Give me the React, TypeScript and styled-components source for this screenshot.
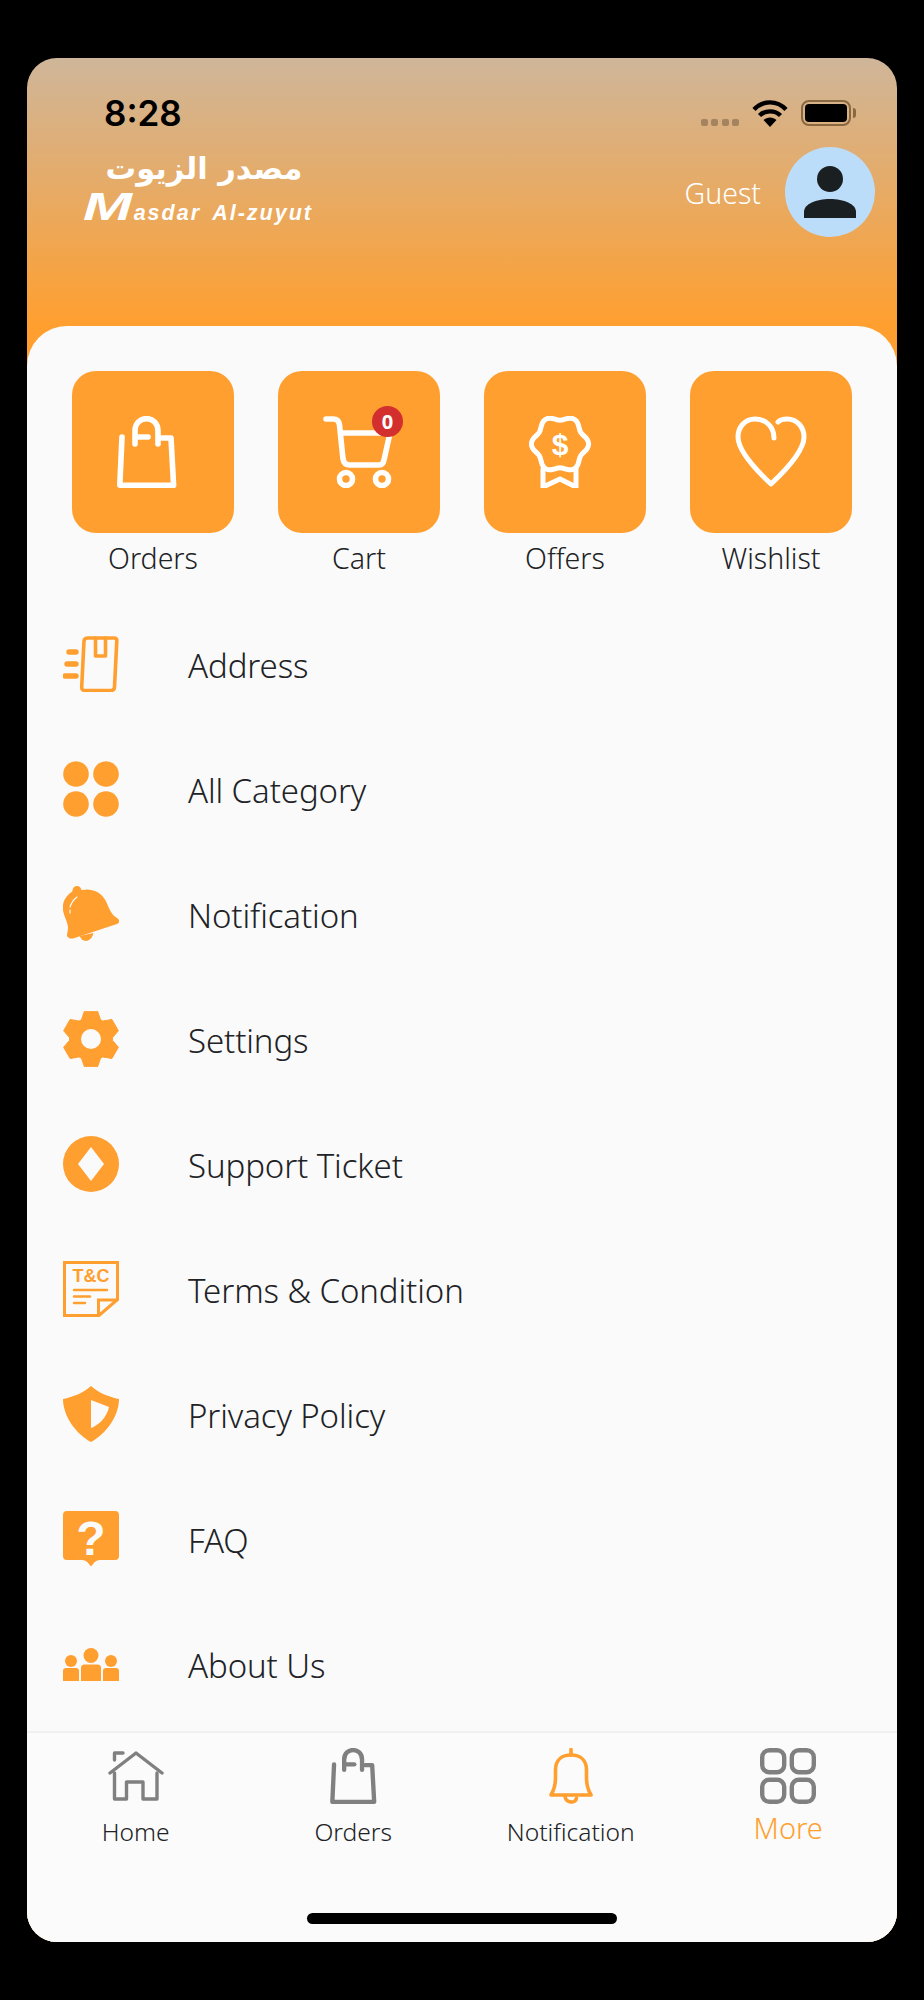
import { ReactNode } from "react";
import styled, { createGlobalStyle } from "styled-components";

const ORANGE = "#ff9f2f";
const GRAY = "#808080";
const TEXT = "#202225";
const UI_FONT = `"Noto Sans", "Open Sans", sans-serif`;

const Global = createGlobalStyle`
  html, body {
    margin: 0;
    padding: 0;
    background: #000;
  }
`;

// wavy outline of the offers badge
const rosette = (cx: number, cy: number, radius: number, wave: number, lobes: number) => {
  const points: string[] = [];
  for (let i = 0; i < 96; i++) {
    const a = (i / 96) * Math.PI * 2;
    const r = radius + wave * Math.cos(lobes * a);
    points.push(`${(cx + r * Math.cos(a)).toFixed(2)} ${(cy + r * Math.sin(a)).toFixed(2)}`);
  }
  return `M${points.join(" L")} Z`;
};

// six tooth cog for the settings row
const cog = (cx: number, cy: number) => {
  const points: string[] = [];
  for (let i = 0; i < 6; i++) {
    const mid = (i * Math.PI) / 3 - Math.PI / 2;
    [
      [21.5, -0.46],
      [28.6, -0.23],
      [28.6, 0.23],
      [21.5, 0.46],
    ].forEach(([r, off]) => {
      points.push(`${(cx + r * Math.cos(mid + off)).toFixed(2)} ${(cy + r * Math.sin(mid + off)).toFixed(2)}`);
    });
  }
  return `M${points.join(" L")} Z`;
};

const Line = styled.g<{ $color?: string; $width?: number }>`
  fill: none;
  stroke: ${({ $color }) => $color ?? "#fff"};
  stroke-width: ${({ $width }) => $width ?? 5};
  stroke-linecap: round;
  stroke-linejoin: round;
`;

const Glyph = styled.text<{ $color: string; $size: number }>`
  font-family: "Liberation Sans", sans-serif;
  font-weight: 700;
  font-size: ${({ $size }) => $size}px;
  fill: ${({ $color }) => $color};
  text-anchor: middle;
`;

const BagPaths = ({ color }: { color: string }) => (
  <Line $color={color} $width={5.6}>
    <path d="M5 21 L2.8 69.2 H56.6 L54 22 H45" />
    <path d="M18 28 V15 C18 -1.5 41 -1.5 41 15 V28" />
    <path d="M20 21 H31" />
  </Line>
);

const CartIcon = () => (
  <svg width="72" height="72" viewBox="0 0 72 72">
    <Line $width={5.6}>
      <path d="M3 3 H10 Q16 3 16.5 9 L20 43 Q21 49 27 49 H56 Q60 49 61 44 L67 17 H18" />
      <circle cx="23" cy="63" r="6.5" />
      <circle cx="59" cy="63" r="6.5" />
    </Line>
  </svg>
);

const OffersIcon = () => (
  <svg width="72" height="72" viewBox="0 0 72 72">
    <Line>
      <path d={rosette(31, 28, 26.2, 2.4, 6)} />
      <path d="M14 52 V71 L31 63 L47 71 V52" strokeLinejoin="miter" strokeLinecap="butt" />
    </Line>
    <Glyph x="31" y="39" $color="#fff" $size={30}>
      $
    </Glyph>
  </svg>
);

const HeartIcon = () => (
  <svg width="72" height="72" viewBox="0 0 72 72">
    <Line>
      <path d="M39 22 C39 10 30 3 20 3 C10 3 3 11 3 21 C3 35 20 53 36 68 C52 53 69 35 69 21 C69 11 62 3 52 3 C48 3 45 4 43 6" />
    </Line>
  </svg>
);

const AddressIcon = () => (
  <svg width="56" height="56" viewBox="0 0 56 56">
    <Line $color={ORANGE} $width={3.6}>
      <path d="M25 2 H51 Q54 2 53.8 5 L51.5 51 Q51.3 54.5 48 54.5 H22 Q18.5 54.5 18.7 51 L21 5 Q21.3 2 25 2 Z" />
      <path d="M32.5 2 V20 H42.5 V2" />
    </Line>
    <Line $color={ORANGE} $width={5.4}>
      <path d="M6 16 H13" />
      <path d="M4 28 H13" />
      <path d="M2 40 H13" />
    </Line>
  </svg>
);

const CategoryIcon = () => (
  <svg width="56" height="56" viewBox="0 0 56 56" fill={ORANGE}>
    <circle cx="13" cy="13" r="12.8" />
    <circle cx="43" cy="13" r="12.8" />
    <circle cx="13" cy="43" r="12.8" />
    <circle cx="43" cy="43" r="12.8" />
  </svg>
);

const BellIcon = () => (
  <svg width="56" height="56" viewBox="0 0 56 56">
    <g fill={ORANGE}>
      <circle cx="14" cy="4.7" r="4.6" />
      <path d="M10 5 C2 10 -1 17 0 24 C1 31 5 36 5 42 C5 45 4 47 4 49 C4 52 8 53 10 52.5 L54 38 C57 37 57 33.5 54 32 C49 29 47 24 45 20 C42 11 36 4 24 3.5 Z" />
      <path d="M16.7 50 C19 57 28 57 30.5 47 Z" />
    </g>
    <Line $width={1.1}>
      <path d="M14 11 C10 14 8 18 7 21" />
      <path d="M7 24 V27" />
    </Line>
  </svg>
);

const GearIcon = () => (
  <svg width="56" height="56" viewBox="0 0 56 56">
    <path d={cog(28, 28)} fill={ORANGE} stroke={ORANGE} strokeWidth="1" strokeLinejoin="round" />
    <circle cx="28" cy="28" r="10" fill="#fafafa" />
  </svg>
);

const SupportIcon = () => (
  <svg width="56" height="56" viewBox="0 0 56 56">
    <circle cx="28" cy="28" r="28" fill={ORANGE} />
    <path d="M28 11 L41 28 L28 45 L15 28 Z" fill="#fafafa" />
  </svg>
);

const TermsIcon = () => (
  <svg width="56" height="56" viewBox="0 0 56 56">
    <Line $color={ORANGE} $width={3}>
      <path d="M1.5 1.5 H54.5 V38.5 L36 54.5 H1.5 Z" strokeLinejoin="miter" />
      <path d="M54 39 H35.5 V54" strokeLinejoin="miter" />
      <path d="M11 29 H44" strokeWidth="2.4" />
      <path d="M11 35.5 H27" strokeWidth="2.4" />
      <path d="M11 42 H22" strokeWidth="2.4" />
    </Line>
    <Glyph x="28" y="21" $color={ORANGE} $size={18}>
      T&amp;C
    </Glyph>
  </svg>
);

const ShieldIcon = () => (
  <svg width="56" height="56" viewBox="0 0 56 56">
    <path d="M28 0 C20 7 10 11 0 13 C0 30 13 48 28 56 C43 48 56 30 56 13 C46 11 36 7 28 0 Z" fill={ORANGE} />
    <path d="M28 14 L46 21 C44 31 36 39 28 42 Z" fill="#fafafa" />
  </svg>
);

const FaqIcon = () => (
  <svg width="56" height="56" viewBox="0 0 56 56">
    <path
      d="M4 0 H52 Q56 0 56 4 V45 Q56 49 52 49 H37 Q33 49 30 53 Q28 57 26 53 Q23 49 19 49 H4 Q0 49 0 45 V4 Q0 0 4 0 Z"
      fill={ORANGE}
    />
    <Glyph x="28" y="43.6" $color="#fafafa" $size={48}>
      ?
    </Glyph>
  </svg>
);

const AboutIcon = () => (
  <svg width="56" height="33" viewBox="0 0 56 33" fill={ORANGE}>
    <circle cx="28" cy="7.5" r="7.5" />
    <circle cx="8" cy="13" r="6" />
    <circle cx="48" cy="13" r="6" />
    <path d="M18 20 Q18 16.5 21.5 16.5 H34.5 Q38 16.5 38 20 V33 H18 Z" />
    <path d="M0 23 Q0 20 3 20 H13 Q16 20 16 23 V33 H0 Z" />
    <path d="M40 23 Q40 20 43 20 H53 Q56 20 56 23 V33 H40 Z" />
  </svg>
);

const HomeIcon = () => (
  <svg width="56" height="50" viewBox="0 0 56 50">
    <Line $color={GRAY} $width={3.4}>
      <path d="M2 22 L28 2 L54 22" />
      <path d="M6.5 9 V2 H15" />
      <path d="M6.5 22 V48 H18.5 V31 H35 V48 H49 V22" />
    </Line>
  </svg>
);

const TabBellIcon = () => (
  <svg width="44" height="56" viewBox="0 0 44 56">
    <Line $color={ORANGE} $width={3.6}>
      <path d="M22 1.5 V7" />
      <path d="M2 47 C5 42 6.5 38 6.5 30 V22 C6.5 12 13 7 22 7 C31 7 37.5 12 37.5 22 V30 C37.5 38 39 42 42 47 Z" />
      <path d="M16 48 C16 55 27 56 27.5 50" />
    </Line>
  </svg>
);

const TabGridIcon = () => (
  <svg width="56" height="56" viewBox="0 0 56 56">
    <Line $color={GRAY} $width={4.4}>
      <rect x="2.2" y="2.2" width="22" height="22" rx="7" />
      <rect x="31.8" y="2.2" width="22" height="22" rx="7" />
      <rect x="2.2" y="31.8" width="22" height="22" rx="7" />
      <rect x="31.8" y="31.8" width="22" height="22" rx="7" />
    </Line>
  </svg>
);

const Page = styled.div`
  width: 924px;
  height: 2000px;
  box-sizing: border-box;
  padding: 58px 27px 58px;
  background: #000;
  font-family: ${UI_FONT};
`;

const Phone = styled.div`
  height: 100%;
  display: flex;
  flex-direction: column;
  border-radius: 30px;
  overflow: hidden;
  background: linear-gradient(#cfb69a 0, ${ORANGE} 268px);
`;

const Header = styled.header`
  height: 268px;
  flex: none;
  box-sizing: border-box;
  padding: 35px 22px 0 56px;
`;

const StatusBar = styled.div`
  height: 40px;
  display: flex;
  align-items: center;
  justify-content: space-between;
  padding: 0 24px 0 21px;
`;

const Clock = styled.span`
  font-family: "Inter", "Liberation Sans", sans-serif;
  font-weight: 600;
  font-size: 35px;
  color: #000;
`;

const StatusIcons = styled.div`
  display: flex;
  align-items: center;
  gap: 13px;
`;

const SignalDots = styled.div`
  display: flex;
  gap: 3.5px;
  margin-top: 18px;
`;

const SignalDot = styled.i`
  width: 7px;
  height: 7px;
  border-radius: 2px;
  background: rgba(0, 0, 0, 0.25);
`;

const Battery = styled.div`
  position: relative;
  width: 50px;
  height: 26px;
  box-sizing: border-box;
  padding: 2px;
  border: 2px solid rgba(60, 30, 0, 0.5);
  border-radius: 8px;

  &::before {
    content: "";
    display: block;
    height: 100%;
    border-radius: 4px;
    background: #000;
  }

  &::after {
    content: "";
    position: absolute;
    right: -7px;
    top: 6px;
    width: 3px;
    height: 10px;
    border-radius: 0 3px 3px 0;
    background: rgba(60, 30, 0, 0.5);
  }
`;

const BrandRow = styled.div`
  display: flex;
  align-items: center;
  justify-content: space-between;
  margin-top: 14px;
`;

const Logo = styled.div`
  display: flex;
  flex-direction: column;
  align-items: center;
  margin-top: -5px;
  color: #fff;
`;

const LogoArabic = styled.div`
  margin: 0 0 5px 12px;
  font-family: "DejaVu Sans", sans-serif;
  font-weight: 700;
  font-size: 30.5px;
  line-height: 36px;
`;

const LogoLatin = styled.div`
  font-family: "Liberation Sans", sans-serif;
  font-weight: 700;
  font-style: italic;
  font-size: 21.5px;
  letter-spacing: 2px;
  word-spacing: 4px;
  line-height: 30px;
  white-space: pre;
`;

const LogoInitial = styled.span`
  display: inline-block;
  margin-right: 19px;
  font-size: 38px;
  line-height: 30px;
  letter-spacing: 0;
  transform: scaleX(1.55);
  transform-origin: left;
`;

const Account = styled.div`
  display: flex;
  align-items: center;
  gap: 24px;
`;

const GuestName = styled.span`
  margin-top: 2px;
  font-size: 28.5px;
  font-weight: 300;
  color: #fff;
`;

const Avatar = styled.div`
  width: 90px;
  height: 90px;
  display: flex;
  align-items: center;
  justify-content: center;
  border-radius: 50%;
  background: #bbddf9;
`;

const Sheet = styled.main`
  flex: 1;
  display: flex;
  flex-direction: column;
  border-radius: 40px 40px 0 0;
  background: #fafafa;
`;

const Shortcuts = styled.section`
  display: grid;
  grid-template-columns: repeat(4, 162px);
  justify-content: space-between;
  padding: 45px 45px 0;
`;

const Shortcut = styled.div`
  display: flex;
  flex-direction: column;
  align-items: center;
`;

const ShortcutTile = styled.div`
  position: relative;
  width: 162px;
  height: 162px;
  display: flex;
  align-items: center;
  justify-content: center;
  border-radius: 24px;
  background: ${ORANGE};
`;

const Badge = styled.span`
  position: absolute;
  left: 94px;
  top: 35px;
  width: 31px;
  height: 31px;
  display: flex;
  align-items: center;
  justify-content: center;
  border-radius: 50%;
  background: #d32f2f;
  color: #fff;
  font-size: 20px;
  font-weight: 700;
`;

const ShortcutLabel = styled.span`
  margin-top: 5px;
  font-size: 28.5px;
  font-weight: 300;
  line-height: 40px;
  color: ${TEXT};
`;

const Menu = styled.nav`
  margin-top: 24.5px;
  padding-left: 36px;
`;

const MenuRow = styled.div`
  height: 125px;
  display: flex;
  align-items: center;
  gap: 69px;
`;

const MenuIcon = styled.div`
  width: 56px;
  display: flex;
  justify-content: center;
  margin-top: -2px;
`;

const MenuLabel = styled.span`
  font-size: 33px;
  font-weight: 300;
  letter-spacing: -0.1px;
  color: ${TEXT};
`;

const TabBar = styled.footer`
  flex: 1;
  display: flex;
  flex-direction: column;
  margin-top: 3px;
  border-top: 2px solid #f0f0f0;
  background: #fbfbfb;
`;

const Tabs = styled.div`
  display: grid;
  grid-template-columns: repeat(4, 1fr);
  padding-top: 15.5px;
`;

const Tab = styled.div`
  display: flex;
  flex-direction: column;
  align-items: center;
`;

const TabIcon = styled.div`
  height: 56px;
  display: flex;
  align-items: center;
`;

const TabLabel = styled.span<{ $active?: boolean }>`
  margin-top: ${({ $active }) => ($active ? "6px" : "10px")};
  font-size: ${({ $active }) => ($active ? "29px" : "24.6px")};
  font-weight: 300;
  line-height: 36px;
  color: ${({ $active }) => ($active ? ORANGE : TEXT)};
`;

const HomeIndicator = styled.div`
  width: 310px;
  height: 11px;
  margin: auto auto 18px;
  border-radius: 6px;
  background: #000;
`;

const shortcuts: { label: string; icon: ReactNode; count?: number }[] = [
  {
    label: "Orders",
    icon: (
      <svg width="72" height="72" viewBox="0 0 72 72">
        <BagPaths color="#fff" />
      </svg>
    ),
  },
  { label: "Cart", icon: <CartIcon />, count: 0 },
  { label: "Offers", icon: <OffersIcon /> },
  { label: "Wishlist", icon: <HeartIcon /> },
];

const menu: { label: string; icon: ReactNode }[] = [
  { label: "Address", icon: <AddressIcon /> },
  { label: "All Category", icon: <CategoryIcon /> },
  { label: "Notification", icon: <BellIcon /> },
  { label: "Settings", icon: <GearIcon /> },
  { label: "Support Ticket", icon: <SupportIcon /> },
  { label: "Terms & Condition", icon: <TermsIcon /> },
  { label: "Privacy Policy", icon: <ShieldIcon /> },
  { label: "FAQ", icon: <FaqIcon /> },
  { label: "About Us", icon: <AboutIcon /> },
];

const tabs: { label: string; icon: ReactNode; active?: boolean }[] = [
  { label: "Home", icon: <HomeIcon /> },
  {
    label: "Orders",
    icon: (
      <svg width="47" height="56" viewBox="0 0 60 72">
        <BagPaths color={GRAY} />
      </svg>
    ),
  },
  { label: "Notification", icon: <TabBellIcon /> },
  { label: "More", icon: <TabGridIcon />, active: true },
];

export default function App() {
  return (
    <>
      <Global />
      <Page>
        <Phone>
          <Header>
            <StatusBar>
              <Clock>8:28</Clock>
              <StatusIcons>
                <SignalDots>
                  <SignalDot />
                  <SignalDot />
                  <SignalDot />
                  <SignalDot />
                </SignalDots>
                <svg width="36" height="27" viewBox="0 0 36 27">
                  <Line $color="#000" $width={4.4}>
                    <path d="M2 9.5 C11 0 25 0 34 9.5" strokeLinecap="butt" />
                    <path d="M7.5 15.5 C13 10 23 10 28.5 15.5" strokeLinecap="butt" />
                  </Line>
                  <path d="M18 27 L11.5 20 C15 16.5 21 16.5 24.5 20 Z" fill="#000" />
                </svg>
                <Battery />
              </StatusIcons>
            </StatusBar>
            <BrandRow>
              <Logo>
                <LogoArabic>مصدر الزيوت</LogoArabic>
                <LogoLatin>
                  <LogoInitial>M</LogoInitial>asdar Al-zuyut
                </LogoLatin>
              </Logo>
              <Account>
                <GuestName>Guest</GuestName>
                <Avatar>
                  <svg width="52" height="52" viewBox="0 0 52 52" fill="#1a1f22">
                    <circle cx="26" cy="13" r="13" />
                    <path d="M0 46 C0 38 12 33 26 33 C40 33 52 38 52 46 V52 H0 Z" />
                  </svg>
                </Avatar>
              </Account>
            </BrandRow>
          </Header>
          <Sheet>
            <Shortcuts>
              {shortcuts.map((item) => (
                <Shortcut key={item.label}>
                  <ShortcutTile>
                    {item.icon}
                    {item.count !== undefined && <Badge>{item.count}</Badge>}
                  </ShortcutTile>
                  <ShortcutLabel>{item.label}</ShortcutLabel>
                </Shortcut>
              ))}
            </Shortcuts>
            <Menu>
              {menu.map((item) => (
                <MenuRow key={item.label}>
                  <MenuIcon>{item.icon}</MenuIcon>
                  <MenuLabel>{item.label}</MenuLabel>
                </MenuRow>
              ))}
            </Menu>
            <TabBar>
              <Tabs>
                {tabs.map((item) => (
                  <Tab key={item.label}>
                    <TabIcon>{item.icon}</TabIcon>
                    <TabLabel $active={item.active}>{item.label}</TabLabel>
                  </Tab>
                ))}
              </Tabs>
              <HomeIndicator />
            </TabBar>
          </Sheet>
        </Phone>
      </Page>
    </>
  );
}
